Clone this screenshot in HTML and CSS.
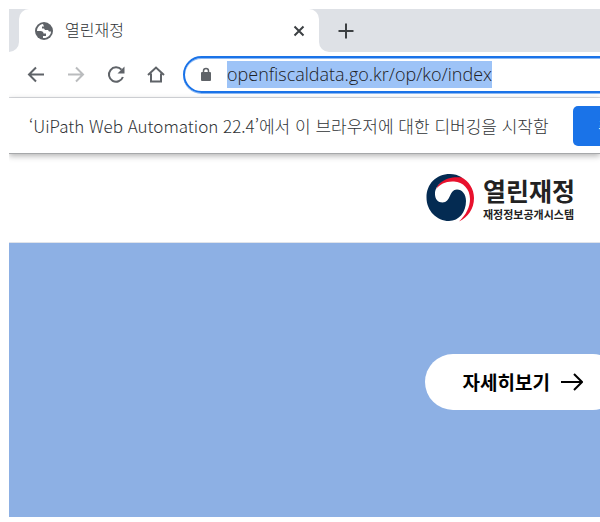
FILE: index.html
```html
<!DOCTYPE html>
<html lang="ko">
<head>
<meta charset="utf-8">
<meta name="viewport" content="width=device-width, initial-scale=1">
<title>열린재정</title>
<link rel="stylesheet" href="styles.css">
</head>
<body>
<div class="browser">
  <div class="tabs">
    <div class="tabs-lead"></div>
    <div class="tab">
      <svg class="globe" viewBox="0 0 20 20" aria-hidden="true">
        <circle cx="10" cy="10" r="9" fill="#5f6368"/>
        <path fill="#fff" d="M9 3 C5.500 3.500 3 6.500 3 10 L6.500 10 C8.500 10 9.500 11 9.500 12.500 L12 12.500 L12 15 L9 15 L9 17 C13.500 17.500 17 14 17 10.500 L15 10.500 L14 9 L11 9 L10 7.500 L8 7.500 L8 5.500 L10 5.500 Z"/>
      </svg>
      <span class="tab-title">열린재정</span>
      <button class="icon-button close" aria-label="탭 닫기"><svg viewBox="0 0 12 12"><path d="M1.500 1.500 10.500 10.500M10.500 1.500 1.500 10.500"/></svg></button>
    </div>
    <div class="tabs-rest">
      <button class="icon-button add" aria-label="새 탭"><svg viewBox="0 0 16 16"><path d="M8 0.500V15.500M0.500 8H15.500"/></svg></button>
    </div>
  </div>
  <div class="toolbar">
    <button class="icon-button" aria-label="뒤로"><svg viewBox="0 0 20 20"><path d="M18 9.500H3M10 2.500 3 9.500 10 16.500"/></svg></button>
    <button class="icon-button" aria-label="앞으로" disabled><svg viewBox="0 0 20 20"><path d="M2 9.500H17M10 2.500 17 9.500 10 16.500"/></svg></button>
    <button class="icon-button" aria-label="새로고침"><svg viewBox="0 0 20 20"><path d="M15.500 4.700A7.200 7.200 0 1 0 16.900 12"/><path class="solid" d="M18.500 1.500V8.500H11.500Z"/></svg></button>
    <button class="icon-button" aria-label="홈"><svg viewBox="0 0 20 20"><path d="M2 10 10 2.500 18 10M5 8.500V16.500H15V8.500"/></svg></button>
    <div class="address">
      <svg class="lock" viewBox="0 0 12 16" aria-hidden="true"><path class="lock-body" d="M2 5H10A1 1 0 0 1 11 6V13A1 1 0 0 1 10 14H2A1 1 0 0 1 1 13V6A1 1 0 0 1 2 5Z"/><path class="shackle" d="M3.500 6V4A2.500 2.500 0 0 1 8.500 4V6"/></svg>
      <input class="url" type="text" aria-label="주소" value="openfiscaldata.go.kr/op/ko/index">
    </div>
  </div>
  <div class="infobar">
    <span class="message">‘UiPath Web Automation 22.4’에서 이 브라우저에 대한 디버깅을 시작함</span>
    <button class="cancel">취소</button>
  </div>
  <header class="site-header">
    <a class="brand" href="#">
      <svg class="emblem" viewBox="0 0 48 48" aria-hidden="true">
        <path fill="#e8112d" d="M10 15C14 5 25 1 35 3C43 7 48 15 48 24C48 35 42 43 33 47.500C40 41 44 33 44 25C44 15 37 8 28 7.500C20 7 14 10 10 15Z"/>
        <path fill="#042b52" d="M36 3.500C32 1 28 0 24 0C10 0 0.500 10 0.500 23.500C0.500 37 11 47 23 47C33 47 40 38 40 27C40 20 36 15.500 31 15.500C23 15.500 25 28.500 16.500 28.500C12 28.500 9 25 9 20C9 10 20 1.500 36 3.500Z"/>
      </svg>
      <span class="brand-text"><strong>열린재정</strong><small>재정정보공개시스템</small></span>
    </a>
  </header>
  <main class="hero">
    <a class="more" href="#">자세히보기 <svg viewBox="0 0 22 18" aria-hidden="true"><path d="M0 9H21M13 1 21 9 13 17"/></svg></a>
  </main>
</div>
</body>
</html>
```
FILE: styles.css
```css
* { box-sizing: border-box; }
body {
  margin: 0;
  padding: 9px 0 5px 9px;
  min-height: 100vh;
  display: flex;
  overflow: hidden;
  background: #fff;
  font-family: "Noto Sans", "Noto Sans CJK KR", sans-serif;
  color: #303336;
}
button { border: 0; padding: 0; background: none; font: inherit; }
svg { display: block; flex: none; }
.browser { flex: 1; min-width: 0; display: flex; flex-direction: column; overflow: hidden; }

.tabs { display: flex; height: 43px; background: linear-gradient(#dee1e6, #dee1e6) no-repeat 0 0 / 100% 20px; }
.tabs-lead { width: 10px; background: #dee1e6; border-bottom-right-radius: 10px; }
.tab {
  width: 300px;
  display: flex;
  align-items: center;
  padding: 0 12px 0 15px;
  border-radius: 10px 10px 0 0;
  background: #fff;
}
.globe { width: 20px; height: 20px; }
.tab-title { flex: 1; margin-left: 11px; padding-bottom: 4px; font: 300 16px/24px "Noto Sans CJK KR", sans-serif; }
.tabs-rest { flex: 1; padding-left: 16px; display: flex; align-items: center; background: #dee1e6; border-bottom-left-radius: 10px; }

.icon-button { display: grid; place-items: center; width: 20px; height: 20px; flex: none; }
.icon-button svg { width: 20px; height: 20px; fill: none; stroke: #5f6368; stroke-width: 2; }
.icon-button .solid { fill: #5f6368; stroke: none; }
.icon-button:disabled svg { stroke: #babcbe; }
.icon-button.close { width: 16px; }
.icon-button.close svg { width: 12px; height: 12px; stroke: #3c4043; }
.icon-button.add { width: 22px; }
.icon-button.add svg { width: 16px; height: 16px; stroke: #3c4043; }

.toolbar {
  display: flex;
  align-items: center;
  gap: 20px;
  height: 46px;
  padding-left: 17px;
  border-bottom: 1px solid #dadce0;
}
.address {
  flex: 1;
  display: flex;
  align-items: center;
  height: 37px;
  margin: 0 -24px 0 -3px;
  padding-left: 15px;
  border: 2px solid #1a73e8;
  border-radius: 19px;
  box-shadow: inset 0 1px 0 #8cb8f3, 0 1px 0 #8cb8f3;
}
.lock { width: 12px; height: 16px; }
.lock-body { fill: #5f6368; }
.shackle { fill: none; stroke: #5f6368; stroke-width: 1.5; }
.url {
  field-sizing: content;
  height: 27px;
  margin-left: 15px;
  padding: 0;
  border: 0;
  outline: 0;
  background: #9dc3f7;
  color: #202124;
  font: 300 18px/27px "Open Sans", sans-serif;
}

.infobar {
  position: relative;
  display: flex;
  align-items: center;
  height: 56px;
  padding-left: 20px;
  border-bottom: 1px solid #a6a8aa;
  box-shadow: 0 2px 6px rgba(0, 0, 0, .3);
}
.message { width: 544px; flex: none; white-space: nowrap; font: 300 17px/24px "Noto Sans CJK KR", sans-serif; }
.cancel { flex: none; width: 80px; height: 40px; border-radius: 5px; background: #1a73e8; color: #fff; font-size: 16px; }

.site-header { height: 89px; display: flex; justify-content: flex-end; align-items: center; padding-right: 25px; border-bottom: 1px solid #dfe3ea; }
.brand { display: flex; align-items: center; gap: 9px; color: #222; text-decoration: none; }
.emblem { width: 48px; height: 48px; }
.brand-text { display: flex; flex-direction: column; font-family: "Noto Sans CJK KR", sans-serif; }
.brand-text strong { font-size: 25px; line-height: 32px; }
.brand-text small { font-size: 11px; font-weight: 700; line-height: 16px; }

.hero { flex: 1; display: flex; justify-content: flex-end; align-items: flex-start; padding-top: 111px; background: #8db0e4; }
.more {
  display: flex;
  align-items: center;
  gap: 11px;
  height: 56px;
  margin-right: -21px;
  padding: 0 38px;
  border-radius: 28px;
  background: #fff;
  color: #000;
  font: 700 19px/28px "Noto Sans CJK KR", sans-serif;
  text-decoration: none;
}
.more svg { width: 22px; height: 18px; fill: none; stroke: #000; stroke-width: 2; }
```
